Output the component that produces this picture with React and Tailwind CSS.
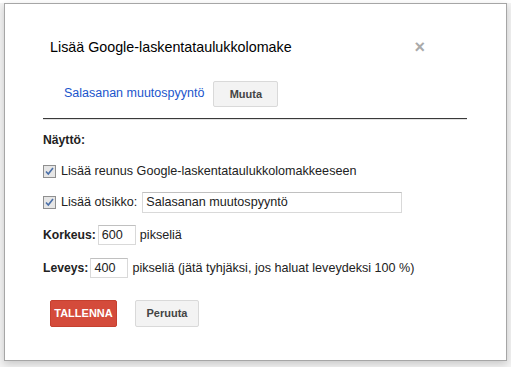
import React from "react";

function Check() {
  return (
    <span className="inline-flex w-[13px] h-[13px] border border-[#8f8f8f] bg-[#e6e6e6] items-center justify-center shrink-0">
      <svg width="11" height="11" viewBox="0 0 11 11">
        <path d="M2 5.5 L4.3 8 L9 2" fill="none" stroke="#4a6fa8" strokeWidth="1.6" />
      </svg>
    </span>
  );
}

export default function App() {
  return (
    <div
      className="w-[511px] h-[367px] bg-[#f3f3f3] overflow-hidden relative"
      style={{ fontFamily: '"Liberation Sans", Arial, sans-serif' }}
    >
      <div className="h-[3px] bg-white" />
      <div className="ml-[4px] w-[503px] h-[358px] bg-white border border-[#a6a6a6] shadow-[0_3px_8px_rgba(0,0,0,0.18)] pl-[38px] pr-[39px] pt-[34px] text-[12.6px] text-[#222]">
        <div className="flex items-center h-[19px] pl-[7px]">
          <div className="text-[14.3px] leading-[19px] text-black">Lisää Google-laskentataulukkolomake</div>
          <div className="ml-auto mr-[42px] text-[#aaa] text-[18px] font-bold leading-[19px]">×</div>
        </div>
        <div className="flex items-center mt-[24px] pl-[21px]">
          <span className="text-[#1a55cc] text-[12.5px] leading-[16px] -mt-[3px]">Salasanan muutospyyntö</span>
          <button className="ml-[9px] w-[65px] h-[26px] bg-[#f3f3f3] border border-[#d9d9d9] rounded-[2px] text-[11px] font-bold text-[#444]">
            Muuta
          </button>
        </div>
        <div className="mt-[11px] h-[1px] bg-[#3a3a3a]" />
        <div className="h-[1px] bg-[#e2e2e2]" />
        <div className="mt-[12px] font-bold text-[12.2px] leading-[16px] text-[#222]">Näyttö:</div>
        <div className="mt-[13px] flex items-center h-[20px] gap-[5px]">
          <Check />
          <span>Lisää reunus Google-laskentataulukkolomakkeeseen</span>
        </div>
        <div className="mt-[11px] flex items-center h-[21px] gap-[5px]">
          <Check />
          <span>Lisää otsikko:</span>
          <div className="w-[260px] h-[21px] border border-[#d9d9d9] border-t-[#c0c0c0] flex items-center pl-[3px]">
            Salasanan muutospyyntö
          </div>
        </div>
        <div className="mt-[12px] flex items-center h-[20px]">
          <span className="font-bold text-[12.2px]">Korkeus:</span>
          <div className="ml-[2px] w-[38px] h-[20px] border border-[#d9d9d9] border-t-[#c0c0c0] flex items-center pl-[3px]">600</div>
          <span className="ml-[4px]">pikseliä</span>
        </div>
        <div className="mt-[13px] flex items-center h-[20px]">
          <span className="font-bold text-[12.2px]">Leveys:</span>
          <div className="ml-[2px] w-[38px] h-[20px] border border-[#d9d9d9] border-t-[#c0c0c0] flex items-center pl-[3px]">400</div>
          <span className="ml-[4px]">pikseliä (jätä tyhjäksi, jos haluat leveydeksi 100 %)</span>
        </div>
        <div className="mt-[22px] flex items-center pl-[7px] gap-[18px]">
          <button className="w-[67px] h-[27px] bg-[#d44b3b] border border-[#c5402f] rounded-[2px] text-white text-[11px] font-bold">
            TALLENNA
          </button>
          <button className="w-[64px] h-[27px] bg-[#f3f3f3] border border-[#d9d9d9] rounded-[2px] text-[#444] text-[11px] font-bold">
            Peruuta
          </button>
        </div>
      </div>
    </div>
  );
}
